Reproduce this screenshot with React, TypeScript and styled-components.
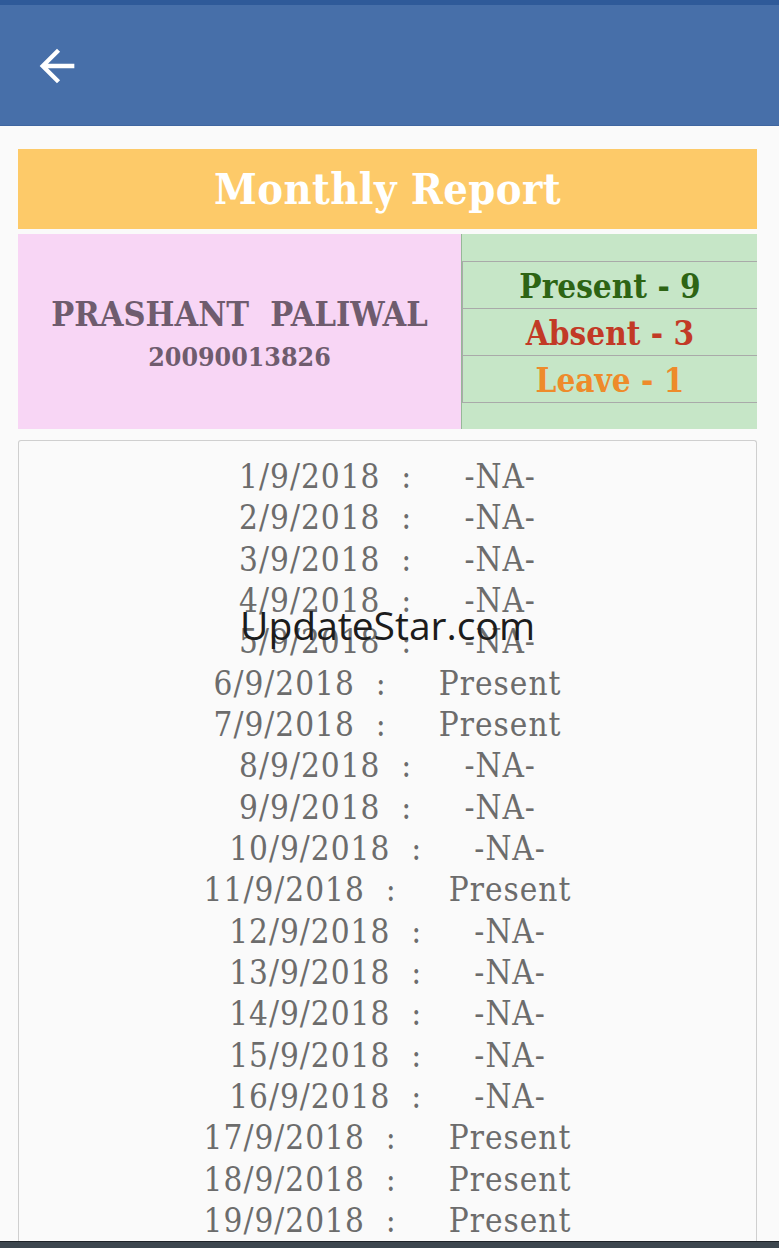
import React from "react";
import styled, { createGlobalStyle } from "styled-components";

type Day = {
  date: string;
  status: string;
};

const SERIF = `"DejaVu Serif Condensed", "DejaVu Serif", "Liberation Serif", serif`;

const DAYS: Day[] = [
  { date: "1/9/2018", status: "-NA-" },
  { date: "2/9/2018", status: "-NA-" },
  { date: "3/9/2018", status: "-NA-" },
  { date: "4/9/2018", status: "-NA-" },
  { date: "5/9/2018", status: "-NA-" },
  { date: "6/9/2018", status: "Present" },
  { date: "7/9/2018", status: "Present" },
  { date: "8/9/2018", status: "-NA-" },
  { date: "9/9/2018", status: "-NA-" },
  { date: "10/9/2018", status: "-NA-" },
  { date: "11/9/2018", status: "Present" },
  { date: "12/9/2018", status: "-NA-" },
  { date: "13/9/2018", status: "-NA-" },
  { date: "14/9/2018", status: "-NA-" },
  { date: "15/9/2018", status: "-NA-" },
  { date: "16/9/2018", status: "-NA-" },
  { date: "17/9/2018", status: "Present" },
  { date: "18/9/2018", status: "Present" },
  { date: "19/9/2018", status: "Present" },
  { date: "20/9/2018", status: "-NA-" },
];

const COUNT_COLOR = {
  present: "#2d6414",
  absent: "#c23a26",
  leave: "#ee8b2b",
};

const GlobalStyle = createGlobalStyle`
  html, body {
    margin: 0;
    padding: 0;
    background: #fafafa;
    height: 100%;
    overflow: hidden;
  }
  #root {
    height: 100%;
  }
`;

const Screen = styled.div`
  height: 1248px;
  display: flex;
  flex-direction: column;
  background: #fafafa;
  overflow: hidden;
`;

const AppBar = styled.header`
  flex-shrink: 0;
  height: 120px;
  background: #476fa9;
  border-top: 5px solid #2f5a99;
  border-bottom: 1px solid #3f66a0;
  display: flex;
  align-items: center;
  padding-left: 31px;
`;

const BackButton = styled.button`
  width: 52px;
  height: 52px;
  padding: 0;
  margin-top: 2px;
  border: none;
  background: none;
  display: flex;
  color: #ffffff;
  cursor: pointer;
`;

const Content = styled.main`
  flex: 1;
  min-height: 0;
  display: flex;
  flex-direction: column;
  padding: 23px 22px 0 18px;
`;

const Banner = styled.div`
  height: 80px;
  background: #fdca69;
  display: flex;
  align-items: center;
  justify-content: center;
  font-family: ${SERIF};
  font-stretch: condensed;
  font-weight: bold;
  font-size: 43px;
  letter-spacing: 0.4px;
  color: #ffffff;
`;

const InfoRow = styled.div`
  margin-top: 5px;
  height: 195px;
  display: flex;
`;

const StudentCell = styled.div`
  width: 443px;
  background: #f8d6f5;
  display: flex;
  flex-direction: column;
  align-items: center;
  justify-content: center;
  font-family: ${SERIF};
  font-stretch: condensed;
  font-weight: bold;
  color: #6f5c6e;
  padding-top: 4px;
  box-sizing: border-box;
`;

const StudentName = styled.div`
  font-size: 34px;
  line-height: 46px;
  white-space: pre;
`;

const StudentId = styled.div`
  font-size: 26.5px;
  line-height: 40px;
`;

const CountsCell = styled.div`
  flex: 1;
  background: #c6e6c7;
  border-left: 1px solid #96b898;
  display: flex;
  flex-direction: column;
  justify-content: center;
`;

const CountBox = styled.div<{ $color: string }>`
  height: 47px;
  padding-top: 3px;
  box-sizing: border-box;
  border: 1px solid #a9aaa9;
  border-right: none;
  border-bottom-width: 0;
  &:last-child {
    height: 48px;
    border-bottom-width: 1px;
  }
  display: flex;
  align-items: center;
  justify-content: center;
  font-family: ${SERIF};
  font-stretch: condensed;
  font-weight: bold;
  font-size: 33px;
  color: ${(p) => p.$color};
`;

const ListCard = styled.section`
  position: relative;
  margin-top: 11px;
  flex: 1;
  border: 1px solid #cfcfcf;
  border-bottom: none;
  border-radius: 3px 3px 0 0;
  background: #fafafa;
  padding-top: 15px;
  overflow: hidden;
`;

const DayLine = styled.div`
  text-align: center;
  white-space: pre;
  font-family: ${SERIF};
  font-stretch: condensed;
  font-size: 33px;
  letter-spacing: 1px;
  line-height: 41.33px;
  color: #6c6c6c;
`;

const Watermark = styled.div`
  position: absolute;
  top: 162px;
  left: 0;
  right: 0;
  text-align: center;
  font-family: "Open Sans", "Noto Sans", sans-serif;
  font-size: 39px;
  line-height: 44px;
  color: #1c1c1c;
  pointer-events: none;
`;

const NavBar = styled.div`
  height: 6px;
  flex-shrink: 0;
  background: #3c464e;
  border-top: 1px solid #1e2328;
`;

const ArrowBack = () => (
  <svg width="52" height="52" viewBox="0 0 24 24" fill="currentColor">
    <path d="M20 11H7.83l5.59-5.59L12 4l-8 8 8 8 1.41-1.41L7.83 13H20v-2z" />
  </svg>
);

const App = () => {
  return (
    <>
      <GlobalStyle />
      <Screen>
        <AppBar>
          <BackButton aria-label="Back">
            <ArrowBack />
          </BackButton>
        </AppBar>
        <Content>
          <Banner>Monthly Report</Banner>
          <InfoRow>
            <StudentCell>
              <StudentName>{"PRASHANT  PALIWAL"}</StudentName>
              <StudentId>20090013826</StudentId>
            </StudentCell>
            <CountsCell>
              <CountBox $color={COUNT_COLOR.present}>Present - 9</CountBox>
              <CountBox $color={COUNT_COLOR.absent}>Absent - 3</CountBox>
              <CountBox $color={COUNT_COLOR.leave}>Leave - 1</CountBox>
            </CountsCell>
          </InfoRow>
          <ListCard>
            {DAYS.map((d) => (
              <DayLine key={d.date}>{`${d.date}  :     ${d.status}`}</DayLine>
            ))}
            <Watermark>UpdateStar.com</Watermark>
          </ListCard>
        </Content>
        <NavBar />
      </Screen>
    </>
  );
};

export default App;
